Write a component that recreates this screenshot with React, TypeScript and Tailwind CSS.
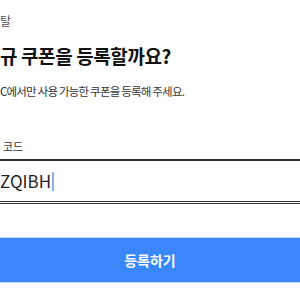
export default function App() {
  return (
    <div
      className="w-[300px] h-[300px] overflow-hidden bg-white"
      style={{ fontFamily: '"Noto Sans CJK KR", "Noto Sans", sans-serif' }}
    >
      <div className="pt-[12px] text-[12px] leading-[18px] text-[#555]">탈</div>
      <h1 className="mt-[12px] text-[19px] leading-[28px] font-bold tracking-[-0.4px] text-[#111]">
        규 쿠폰을 등록할까요?
      </h1>
      <p className="mt-[12px] text-[11.5px] leading-[18px] tracking-[-0.8px] text-[#333]">
        C에서만 사용 가능한 쿠폰을 등록해 주세요.
      </p>
      <div className="mt-[38px] pl-[3px] text-[11px] leading-[16px] text-[#333]">코드</div>
      <div className="mt-[5px] border-t-2 border-[#333]">
        <div className="flex h-[40px] items-center">
          <span className="text-[17px] leading-[20px] text-[#222]">ZQIBH</span>
          <span className="ml-[1px] h-[19px] w-[2px] bg-[#8fb1ea]" />
        </div>
        <div className="h-[3px] border-y border-[#333]" />
      </div>
      <div className="mt-[33px] border-t border-[#c9dbf6]">
        <button className="flex h-[44px] w-full items-center justify-center bg-[#3a86fb] text-[14px] font-bold text-white">
          등록하기
        </button>
        <div className="h-px bg-[#c9dbf6]" />
      </div>
    </div>
  )
}
